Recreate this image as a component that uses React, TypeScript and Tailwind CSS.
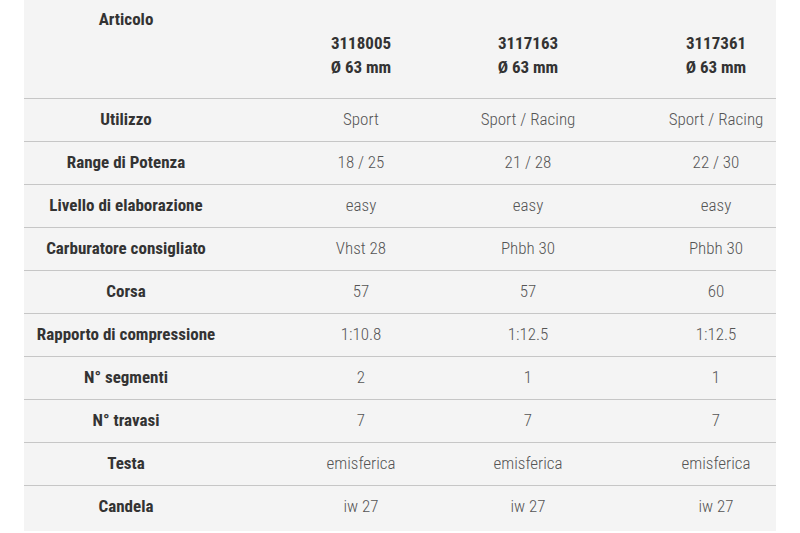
import React from "react";

const rows: [string, string, string, string][] = [
  ["Utilizzo", "Sport", "Sport / Racing", "Sport / Racing"],
  ["Range di Potenza", "18 / 25", "21 / 28", "22 / 30"],
  ["Livello di elaborazione", "easy", "easy", "easy"],
  ["Carburatore consigliato", "Vhst 28", "Phbh 30", "Phbh 30"],
  ["Corsa", "57", "57", "60"],
  ["Rapporto di compressione", "1:10.8", "1:12.5", "1:12.5"],
  ["N° segmenti", "2", "1", "1"],
  ["N° travasi", "7", "7", "7"],
  ["Testa", "emisferica", "emisferica", "emisferica"],
  ["Candela", "iw 27", "iw 27", "iw 27"],
];

const heads = ["3118005", "3117163", "3117361"];

export default function App() {
  return (
    <div
      className="w-[800px] h-[533px] bg-white overflow-hidden"
      style={{ fontFamily: "Roboto, 'Liberation Sans Narrow', sans-serif", fontStretch: "condensed" }}
    >
      <div className="ml-[24px] w-[752px] bg-[#f4f4f4] text-[17px]">
        <div className="grid grid-cols-[204px_250px_150px_148px] h-[98px] text-[#333] font-bold">
          <div className="text-center pt-[7px] leading-[24px]">Articolo</div>
          {heads.map((h, i) => (
            <div
              key={h}
              className={
                "text-center pt-[31px] leading-[24px] " +
                (i === 0 ? "pl-[16px]" : i === 1 ? "pr-[50px]" : "pl-[28px]")
              }
            >
              <div>{h}</div>
              <div>Ø 63 mm</div>
            </div>
          ))}
        </div>
        {rows.map((r, idx) => (
          <div
            key={r[0]}
            className={
              "grid grid-cols-[204px_250px_150px_148px] items-center border-t border-[#c6c6c6] " +
              (idx === rows.length - 1 ? "h-[46px] pb-[3px]" : "h-[43px]")
            }
          >
            <div className="text-center font-bold text-[#333] whitespace-nowrap">{r[0]}</div>
            <div className="text-center font-light text-[#555] whitespace-nowrap pl-[16px]">{r[1]}</div>
            <div className="text-center font-light text-[#555] whitespace-nowrap pr-[50px]">{r[2]}</div>
            <div className="text-center font-light text-[#555] whitespace-nowrap pl-[28px]">{r[3]}</div>
          </div>
        ))}
      </div>
    </div>
  );
}
